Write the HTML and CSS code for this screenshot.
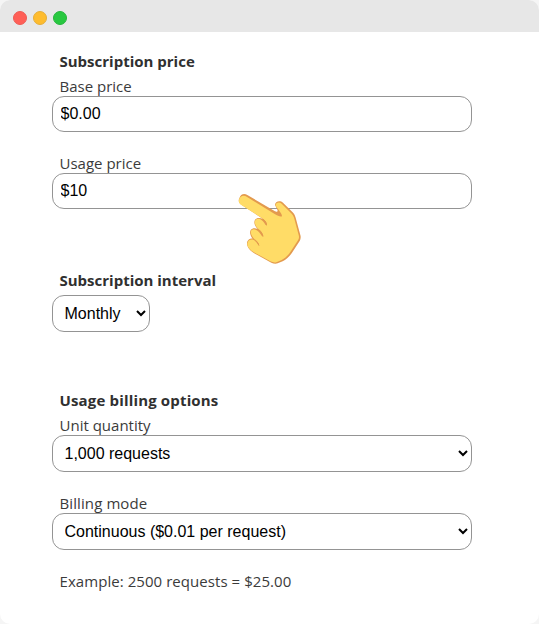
FILE: index.html
```html
<!DOCTYPE html>
<html lang="en">
<head>
<meta charset="utf-8">
<title>Subscription pricing</title>
<link rel="stylesheet" href="styles.css">
</head>
<body>
<main class="window">
  <header class="titlebar">
    <span class="dot dot-close"></span>
    <span class="dot dot-minimize"></span>
    <span class="dot dot-expand"></span>
  </header>
  <form class="form">
    <section class="group">
      <h2 class="heading">Subscription price</h2>
      <label class="label" for="base">Base price</label>
      <input class="control" id="base" type="text" value="$0.00">
      <label class="label spaced" for="usage">Usage price</label>
      <div class="field">
        <input class="control" id="usage" type="text" value="$10">
        <svg class="hand" viewBox="0 0 270 285" aria-hidden="true">
          <path fill="#e39a4e" d="M43 55C46 43 57 39 67 45L150 94C157 98 160 93 156 87L150 75C150 65 164 59 174 68L203 97C208 102 210 107 212 113L226 165C228 171 227 177 224 183L202 217C194 229 184 238 173 244L158 250C152 252 145 251 139 248L90 221C78 214 67 204 66 192C65 182 74 174 83 176C76 168 73 158 77 150C82 144 90 143 98 147C88 137 86 126 90 119C95 113 104 112 114 117L49 74C42 69 39 62 43 55Z"/>
          <path fill="#ffdc67" d="M42 60C43 50 55 44 65 50L149 102C158 107 165 111 171 109C171 101 161 91 153 79C148 69 162 64 170 71L200 101C205 106 206 110 208 116L221 165C223 171 222 176 219 181L198 213C190 226 181 234 170 240L156 246C149 249 143 247 136 244L89 218C77 211 67 202 67 191C68 181 78 176 86 180C94 184 98 193 103 198C103 192 98 186 91 180C82 172 74 160 79 151C88 143 99 151 107 163C110 168 113 171 115 170C116 164 110 157 101 148C93 140 85 128 92 119C100 112 111 118 118 129C121 135 124 138 126 136C127 131 123 124 115 117L49 75C43 71 40 66 42 60Z"/>
          <path class="crease" d="M92 181C97 185 100 191 101 195M103 150C109 155 112 162 113 167M115 118C121 123 124 129 124 133"/>
        </svg>
      </div>
    </section>
    <section class="group interval">
      <h2 class="heading">Subscription interval</h2>
      <select class="control select short" aria-label="Subscription interval"><option>Monthly</option></select>
    </section>
    <section class="group usage">
      <h2 class="heading heading-wide">Usage billing options</h2>
      <label class="label" for="quantity">Unit quantity</label>
      <select class="control select" id="quantity"><option>1,000 requests</option></select>
      <label class="label label-wide spaced" for="mode">Billing mode</label>
      <select class="control select" id="mode"><option>Continuous ($0.01 per request)</option></select>
      <p class="example">Example: 2500 requests = $25.00</p>
    </section>
  </form>
</main>
</body>
</html>
```
FILE: styles.css
```css
* { box-sizing: border-box; }
body { margin: 0; background: #f5f5f5; color: #3b3b3b; font: 15px/24px "Open Sans", sans-serif; }
.window { height: 624px; background: #fff; border-radius: 10px; overflow: hidden; }
.titlebar { height: 32px; padding: 3px 0 0 13px; display: flex; align-items: center; gap: 6px; background: #e7e7e7; }
.dot { width: 14px; height: 14px; border-radius: 50%; border: 1px solid; }
.dot-close { background: #ff5f57; border-color: #ee5b54; }
.dot-minimize { background: #febc2e; border-color: #e5ae38; }
.dot-expand { background: #28c840; border-color: #25b53b; }
.form { width: 420px; margin: 18px 0 0 52px; }
.group { display: flex; flex-direction: column; }
.interval { margin-top: 60px; }
.usage { margin-top: 57px; }
.heading { margin: 0; padding-left: 7.5px; height: 26px; color: #303030; font-size: 15px; line-height: 22px; font-weight: 700; }
.heading-wide { letter-spacing: 0.16px; }
.label { height: 20px; padding-left: 7.5px; line-height: 20px; }
.label-wide { letter-spacing: 0.1px; }
.spaced { margin-top: 21px; }
.control { display: block; width: 100%; height: 36px; margin: 0; padding: 0 7.5px; border: 1px solid #949494; border-radius: 12px; background: #fff; color: #000; font: 16px "Liberation Sans", Arial, sans-serif; }
.select { height: 37px; padding: 0 1px 0 7.5px; }
.short { width: 98px; }
.field { position: relative; }
.hand { position: absolute; left: 173px; top: 7px; width: 90px; height: 95px; }
.crease { fill: none; stroke: #e39a4e; stroke-width: 3; stroke-linecap: round; }
.example { margin: 20px 0 0; padding-left: 7.5px; line-height: 22px; letter-spacing: 0.06px; }
```
